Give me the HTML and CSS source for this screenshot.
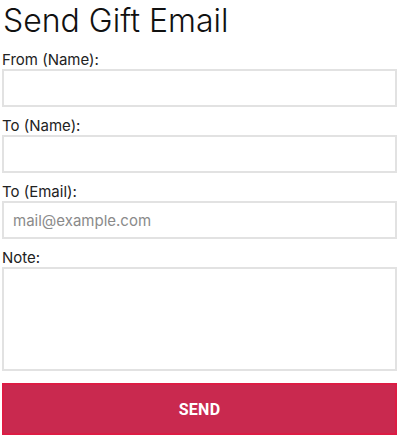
FILE: index.html
```html
<!DOCTYPE html>
<html>
<head>
<meta charset="utf-8">
<link rel="stylesheet" href="styles.css">
</head>
<body>
<form class="gift-form">
  <h1 class="title">Send Gift Email</h1>
  <div class="field">
    <label class="label">From (Name):</label>
    <input class="input" type="text">
  </div>
  <div class="field">
    <label class="label">To (Name):</label>
    <input class="input" type="text">
  </div>
  <div class="field">
    <label class="label">To (Email):</label>
    <input class="input" type="email" placeholder="mail@example.com">
  </div>
  <div class="field">
    <label class="label">Note:</label>
    <textarea class="input textarea"></textarea>
  </div>
  <button class="send" type="button">SEND</button>
</form>
</body>
</html>
```
FILE: styles.css
```css
html, body {
  margin: 0;
  padding: 0;
  background: #fff;
}
body {
  font-family: "Inter", "Liberation Sans", Arial, sans-serif;
  color: #1a1a1a;
}
.gift-form {
  display: flex;
  flex-direction: column;
  padding: 0 3px 0 2px;
}
.title {
  margin: 0;
  font-size: 32px;
  font-weight: 300;
  line-height: 42px;
  color: #111;
  padding-left: 1px;
  margin-bottom: 9px;
}
.field {
  display: flex;
  flex-direction: column;
  margin-bottom: 10px;
}
.label {
  font-size: 15px;
  line-height: 17px;
  color: #222;
  padding-left: 0;
  margin-bottom: 1px;
}
.input {
  box-sizing: border-box;
  height: 38px;
  width: 100%;
  border: 2px solid #e2e2e2;
  border-radius: 0;
  padding: 0 9px;
  font-family: "Inter", "Liberation Sans", Arial, sans-serif;
  font-size: 15px;
  color: #222;
  outline: none;
  margin: 0;
}
.input::placeholder {
  color: #8a8a8a;
}
.textarea {
  height: 104px;
  resize: none;
}
.send {
  height: 52px;
  width: 100%;
  margin-top: 2px;
  background: #c9294f;
  border: 2px solid #dc1c44;
  color: #fff;
  font-family: "Roboto", "Liberation Sans", sans-serif;
  font-weight: 700;
  font-size: 16px;
  letter-spacing: 0.3px;
}
```
